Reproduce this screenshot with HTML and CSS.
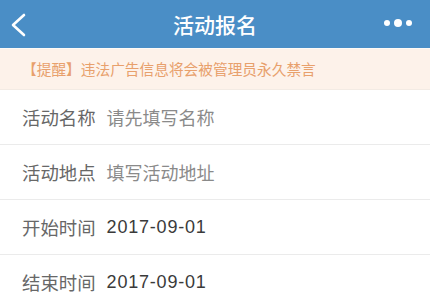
FILE: index.html
```html
<!DOCTYPE html>
<html lang="zh">
<head>
<meta charset="utf-8">
<title>活动报名</title>
<link rel="stylesheet" href="styles.css">
</head>
<body>
<header class="nav">
  <svg class="nav-back" width="30" height="48" viewBox="0 0 30 48">
    <polyline points="24,15 13,25 24,35" fill="none" stroke="#fff" stroke-width="2.6" stroke-linecap="round" stroke-linejoin="round"/>
  </svg>
  <h1 class="nav-title">活动报名</h1>
  <svg class="nav-more" width="34" height="48" viewBox="0 0 34 48">
    <circle cx="6" cy="23" r="3" fill="#fff"/>
    <circle cx="17" cy="23" r="4" fill="#fff"/>
    <circle cx="28" cy="23" r="3" fill="#fff"/>
  </svg>
</header>
<div class="notice">【提醒】违法广告信息将会被管理员永久禁言</div>
<div class="form">
  <div class="row"><span class="label">活动名称</span><span class="value placeholder">请先填写名称</span></div>
  <div class="row"><span class="label">活动地点</span><span class="value placeholder">填写活动地址</span></div>
  <div class="row"><span class="label">开始时间</span><span class="value date">2017-09-01</span></div>
  <div class="row"><span class="label">结束时间</span><span class="value date">2017-09-01</span></div>
</div>
</body>
</html>
```
FILE: styles.css
```css
html, body {
  margin: 0;
  padding: 0;
  background: #fff;
  font-family: "Noto Sans CJK SC", "Noto Sans", sans-serif;
}
.nav {
  height: 48px;
  background: #4a8ec6;
  display: flex;
  align-items: center;
  justify-content: space-between;
  position: relative;
}
.nav-back {
  display: block;
}
.nav-title {
  margin: 0;
  font-size: 21px;
  font-weight: 500;
  color: #fff;
  line-height: 48px;
  position: absolute;
  left: 0;
  right: 0;
  text-align: center;
  pointer-events: none;
}
.nav-more {
  display: block;
  margin-right: 15px;
}
.notice {
  height: 40px;
  border-top: 1px solid #fefaf6;
  border-bottom: 1px solid #f3ebe4;
  background: #fdf2ea;
  color: #e8a06c;
  font-size: 14.7px;
  line-height: 40px;
  padding-left: 22px;
  white-space: nowrap;
}
.row {
  height: 54px;
  border-bottom: 1px solid #ebebeb;
  display: flex;
  align-items: center;
  padding-left: 22px;
  font-size: 18px;
  gap: 11px;
}
.label {
  color: #676767;
  font-size: 18.4px;
}
.placeholder {
  color: #8a8a8a;
}
.date {
  color: #3a3a3a;
  font-family: "Liberation Sans", "Noto Sans CJK SC", sans-serif;
  letter-spacing: 0.8px;
}
```
